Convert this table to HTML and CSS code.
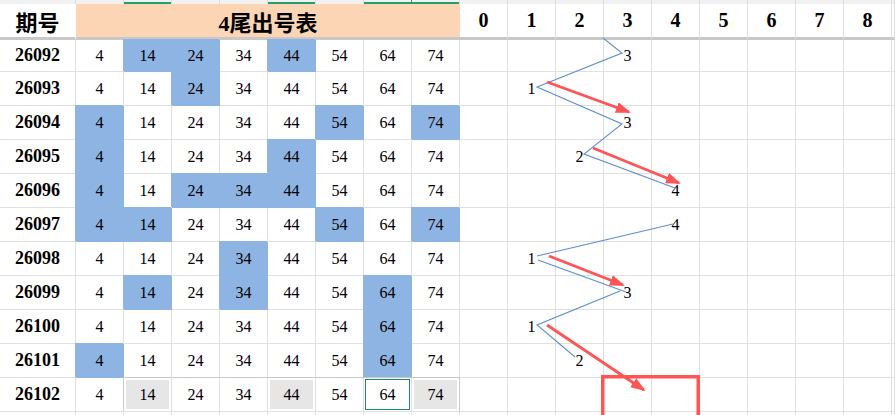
FILE: index.html
```html
<!DOCTYPE html>
<html lang="zh">
<head>
<meta charset="utf-8">
<title>4尾出号表</title>
<link rel="stylesheet" href="styles.css">
</head>
<body>
<div class="page">
  <div class="sheet">
    <!-- top band -->
    <div class="band"></div><div class="band"></div><div class="band green"></div><div class="band"></div><div class="band"></div><div class="band green"></div><div class="band"></div><div class="band green gr"></div><div class="band green"></div>
    <div class="band"></div><div class="band"></div><div class="band"></div><div class="band"></div><div class="band"></div><div class="band"></div><div class="band"></div><div class="band"></div><div class="band"></div><div class="band"></div>

    <!-- header -->
    <div class="hd hd-id">期号</div>
    <div class="hd hd-title">4尾出号表</div>
    <div class="hd hd-n">0</div><div class="hd hd-n">1</div><div class="hd hd-n">2</div><div class="hd hd-n">3</div><div class="hd hd-n">4</div><div class="hd hd-n">5</div><div class="hd hd-n">6</div><div class="hd hd-n">7</div><div class="hd hd-n">8</div><div class="hd hd-n"></div>

    <!-- 26092 -->
    <div class="c id">26092</div>
    <div class="c">4</div><div class="c on">14</div><div class="c on">24</div><div class="c">34</div><div class="c on">44</div><div class="c">54</div><div class="c">64</div><div class="c">74</div>
    <div class="c"></div><div class="c"></div><div class="c"></div><div class="c lb">3</div><div class="c"></div><div class="c"></div><div class="c"></div><div class="c"></div><div class="c"></div><div class="c"></div>

    <!-- 26093 -->
    <div class="c id">26093</div>
    <div class="c">4</div><div class="c">14</div><div class="c on">24</div><div class="c">34</div><div class="c">44</div><div class="c">54</div><div class="c">64</div><div class="c">74</div>
    <div class="c"></div><div class="c lb">1</div><div class="c"></div><div class="c"></div><div class="c"></div><div class="c"></div><div class="c"></div><div class="c"></div><div class="c"></div><div class="c"></div>

    <!-- 26094 -->
    <div class="c id">26094</div>
    <div class="c on">4</div><div class="c">14</div><div class="c">24</div><div class="c">34</div><div class="c">44</div><div class="c on">54</div><div class="c">64</div><div class="c on">74</div>
    <div class="c"></div><div class="c"></div><div class="c"></div><div class="c lb">3</div><div class="c"></div><div class="c"></div><div class="c"></div><div class="c"></div><div class="c"></div><div class="c"></div>

    <!-- 26095 -->
    <div class="c id">26095</div>
    <div class="c on">4</div><div class="c">14</div><div class="c">24</div><div class="c">34</div><div class="c on">44</div><div class="c">54</div><div class="c">64</div><div class="c">74</div>
    <div class="c"></div><div class="c"></div><div class="c lb">2</div><div class="c"></div><div class="c"></div><div class="c"></div><div class="c"></div><div class="c"></div><div class="c"></div><div class="c"></div>

    <!-- 26096 -->
    <div class="c id">26096</div>
    <div class="c on">4</div><div class="c">14</div><div class="c on">24</div><div class="c on">34</div><div class="c on">44</div><div class="c">54</div><div class="c">64</div><div class="c">74</div>
    <div class="c"></div><div class="c"></div><div class="c"></div><div class="c"></div><div class="c lb">4</div><div class="c"></div><div class="c"></div><div class="c"></div><div class="c"></div><div class="c"></div>

    <!-- 26097 -->
    <div class="c id">26097</div>
    <div class="c on">4</div><div class="c on">14</div><div class="c">24</div><div class="c">34</div><div class="c">44</div><div class="c on">54</div><div class="c">64</div><div class="c on">74</div>
    <div class="c"></div><div class="c"></div><div class="c"></div><div class="c"></div><div class="c lb">4</div><div class="c"></div><div class="c"></div><div class="c"></div><div class="c"></div><div class="c"></div>

    <!-- 26098 -->
    <div class="c id">26098</div>
    <div class="c">4</div><div class="c">14</div><div class="c">24</div><div class="c on">34</div><div class="c">44</div><div class="c">54</div><div class="c">64</div><div class="c">74</div>
    <div class="c"></div><div class="c lb">1</div><div class="c"></div><div class="c"></div><div class="c"></div><div class="c"></div><div class="c"></div><div class="c"></div><div class="c"></div><div class="c"></div>

    <!-- 26099 -->
    <div class="c id">26099</div>
    <div class="c">4</div><div class="c on">14</div><div class="c">24</div><div class="c on">34</div><div class="c">44</div><div class="c">54</div><div class="c on">64</div><div class="c">74</div>
    <div class="c"></div><div class="c"></div><div class="c"></div><div class="c lb">3</div><div class="c"></div><div class="c"></div><div class="c"></div><div class="c"></div><div class="c"></div><div class="c"></div>

    <!-- 26100 -->
    <div class="c id">26100</div>
    <div class="c">4</div><div class="c">14</div><div class="c">24</div><div class="c">34</div><div class="c">44</div><div class="c">54</div><div class="c on">64</div><div class="c">74</div>
    <div class="c"></div><div class="c lb">1</div><div class="c"></div><div class="c"></div><div class="c"></div><div class="c"></div><div class="c"></div><div class="c"></div><div class="c"></div><div class="c"></div>

    <!-- 26101 -->
    <div class="c id">26101</div>
    <div class="c on">4</div><div class="c">14</div><div class="c">24</div><div class="c">34</div><div class="c">44</div><div class="c">54</div><div class="c on">64</div><div class="c">74</div>
    <div class="c"></div><div class="c"></div><div class="c lb">2</div><div class="c"></div><div class="c"></div><div class="c"></div><div class="c"></div><div class="c"></div><div class="c"></div><div class="c"></div>

    <!-- 26102 -->
    <div class="c id">26102</div>
    <div class="c">4</div><div class="c rg grey first">14</div><div class="c rg">24</div><div class="c rg">34</div><div class="c rg grey">44</div><div class="c rg">54</div><div class="c rg sel">64</div><div class="c rg grey last">74</div>
    <div class="c"></div><div class="c"></div><div class="c"></div><div class="c"></div><div class="c"></div><div class="c"></div><div class="c"></div><div class="c"></div><div class="c"></div><div class="c"></div>

    <!-- partial next row -->
    <div class="c"></div><div class="c"></div><div class="c"></div><div class="c"></div><div class="c"></div><div class="c"></div><div class="c"></div><div class="c"></div><div class="c"></div>
    <div class="c"></div><div class="c"></div><div class="c"></div><div class="c"></div><div class="c"></div><div class="c"></div><div class="c"></div><div class="c"></div><div class="c"></div><div class="c"></div>
  </div>

  <svg class="overlay" width="895" height="415" viewBox="0 0 895 415" aria-hidden="true">
    <defs>
      <marker id="ah" markerUnits="userSpaceOnUse" markerWidth="15" markerHeight="11" refX="13" refY="5.5" orient="auto">
        <path d="M0,0 L15,5.5 L0,11 Z" fill="#ff5555"/>
      </marker>
    </defs>
    <g stroke="#5b8fd5" stroke-width="1.1" fill="none">
      <polyline points="603,38 622,53 537,87 622,124 584,154 675,188"/>
      <polyline points="673,224 537,256"/>
      <polyline points="538,260 626,292"/>
      <polyline points="620,291 537,325 575,357"/>
    </g>
    <g stroke="#ff5555" stroke-width="2.8" fill="none" marker-end="url(#ah)">
      <line x1="547" y1="82" x2="629" y2="112"/>
      <line x1="593" y1="148" x2="679" y2="183"/>
      <line x1="549" y1="256" x2="623" y2="285"/>
      <line x1="547" y1="325" x2="644" y2="390"/>
    </g>
    <rect x="602.75" y="376.75" width="95.5" height="60" fill="none" stroke="#ff5555" stroke-width="3.5"/>
  </svg>
</div>
</body>
</html>
```

FILE: styles.css
```css
html, body {
  margin: 0;
  padding: 0;
  background: #fff;
}

.page {
  position: relative;
  width: 895px;
  height: 415px;
  overflow: hidden;
  font-family: "Liberation Serif", "Noto Sans CJK SC", serif;
  color: #000;
}

.sheet {
  display: grid;
  grid-template-columns: 76px repeat(17, 48px) 1fr;
  grid-template-rows: 4px 36px 32px repeat(10, 34px) 34px;
}

/* top band (tail of the row above) */
.band {
  box-sizing: border-box;
  background: #f1f1f1;
  border-right: 1px solid #dcdcdc;
}
.band.green {
  box-shadow: inset 0 -2px 0 #21a06a;
}
.band.gr {
  border-right-color: #21a06a;
}

/* header row */
.hd {
  box-sizing: border-box;
  display: flex;
  align-items: center;
  justify-content: center;
  border-bottom: 3px solid #c8c8c8;
  font-weight: 700;
}
.hd-id {
  font-size: 22px;
  background: #fff;
  border-right: 1px solid #fff;
}
.hd-title {
  grid-column: span 8;
  background: #fcd5b4;
  font-size: 22px;
}
.hd-n {
  font-size: 20px;
  background: #fff;
  border-right: 1px solid #e0e0e0;
}

/* cells */
.c {
  box-sizing: border-box;
  display: flex;
  align-items: center;
  justify-content: center;
  border-right: 1px solid #e0e0e0;
  border-bottom: 1px solid #e0e0e0;
  font-size: 16px;
  background: #fff;
}
.c.id {
  font-weight: 700;
  font-size: 18px;
}
.c.on {
  background: #8db4e2;
  border-right-color: #8db4e2;
  border-bottom-color: #8db4e2;
  box-shadow: -1px -1px 0 0 #8db4e2;
}
.c.lb {
  font-size: 16px;
}

/* last row selection range */
.c.rg {
  box-shadow: 0 -1px 0 0 #c8c8c8;
}
.c.rg.grey {
  background: #e6e6e6;
  box-shadow: inset 0 0 0 2px #fff, 0 -1px 0 0 #c8c8c8;
}
.c.rg.first {
  box-shadow: inset 0 0 0 2px #fff, -1px -1px 0 0 #c8c8c8;
}
.c.rg.last {
  border-right-color: #c8c8c8;
}
.c.rg.sel {
  box-shadow: inset 0 0 0 1px #fff, inset 0 0 0 2px #1e8a5e, 0 -1px 0 0 #c8c8c8;
}

/* drawn connector lines and arrows */
.overlay {
  position: absolute;
  left: 0;
  top: 0;
  pointer-events: none;
}
```
